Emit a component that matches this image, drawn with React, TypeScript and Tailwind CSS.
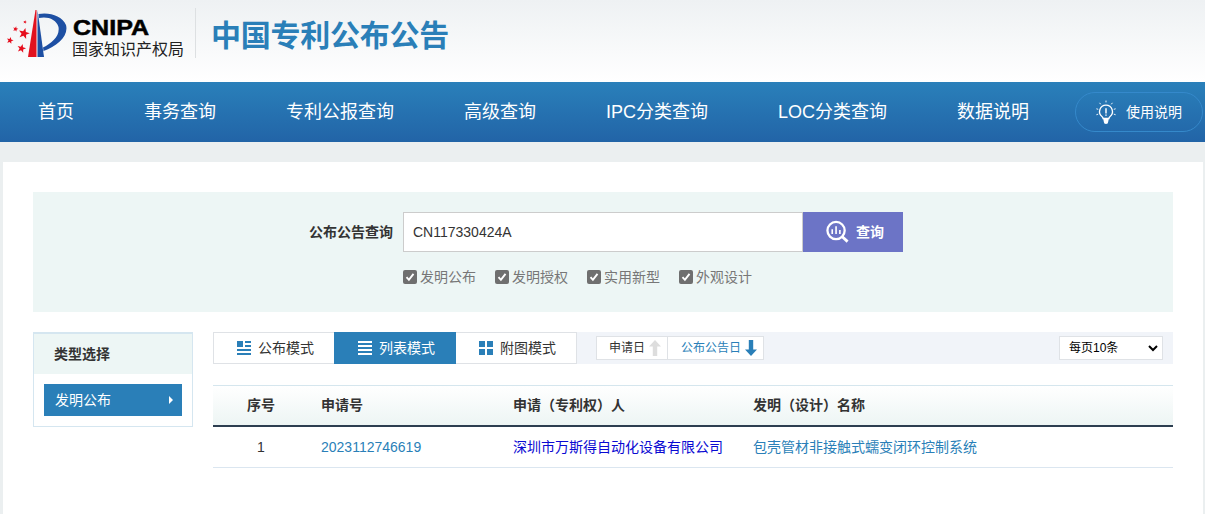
const FONT = "font-['Liberation_Sans','Noto_Sans_CJK_SC',sans-serif]";

function Logo() {
  const star = (cx: number, cy: number, r: number) => {
    const pts: string[] = [];
    for (let i = 0; i < 10; i++) {
      const rad = i % 2 === 0 ? r : r * 0.42;
      const a = -Math.PI / 2 + 0.25 + (i * Math.PI) / 5;
      pts.push(`${(cx + rad * Math.cos(a)).toFixed(2)},${(cy + rad * Math.sin(a)).toFixed(2)}`);
    }
    return <polygon points={pts.join(" ")} fill="#e60f1e" />;
  };
  return (
    <svg width="68" height="50" viewBox="0 0 68 50" className="shrink-0">
      {star(24, 25.5, 5.8)}
      {star(15.5, 21, 2.8)}
      {star(25, 14, 1.9)}
      {star(10, 32.5, 3.6)}
      {star(21.5, 40.5, 4.6)}
      <path d="M35.5 2 L36.5 2 L36.5 49 L28 49 Z" fill="#e2121f" />
      <path d="M37.5 2 L44 49 L37.5 49 Z" fill="#1d4fa3" />
      <path d="M38.5 6 C50 4 62 8 66 17 C69 28 57 38 43.5 43 L43 39.5 C52 35 60 28 58.5 19 C56.5 11 47 8 39 10 Z" fill="#1d4fa3" />
    </svg>
  );
}

function Bulb() {
  return (
    <svg width="22" height="26" viewBox="0 0 24 26" fill="none" className="shrink-0">
      <path d="M12 5.5a7 7 0 0 0-4.2 12.6c.7.6 1 1.3 1 2h6.4c0-.7.3-1.4 1-2A7 7 0 0 0 12 5.5Z" stroke="#fff" strokeWidth="1.4" />
      <path d="M9 20.5h6l-.6 3.2a2.4 2.4 0 0 1-4.8 0Z" fill="#fff" />
      <path d="M12 9v5.5M12 15.8v1.4" stroke="#fff" strokeWidth="1.6" />
      <path d="M12 0.5v2M5 3l1.2 1.6M19 3l-1.2 1.6M1.5 9.5l2 .6M22.5 9.5l-2 .6M1.5 16l2-.7M22.5 16l-2-.7" stroke="#fff" strokeWidth="1" />
    </svg>
  );
}

function SearchIcon() {
  return (
    <svg width="23" height="24" viewBox="0 0 24 24" fill="none" className="shrink-0">
      <circle cx="10.5" cy="10.5" r="9" stroke="#fff" strokeWidth="2.4" />
      <path d="M17 17l5.5 5" stroke="#fff" strokeWidth="3" />
      <path d="M6.5 9v5M10.5 6v8M14.5 10v4" stroke="#fff" strokeWidth="1.7" />
    </svg>
  );
}

function Check({ label }: { label: string }) {
  return (
    <label className="flex items-center w-[92px] text-[14px] leading-[20px] text-[#777777]">
      <span className="w-[14px] h-[14px] rounded-[2px] bg-[#6f6f6f] flex items-center justify-center mr-[3px]">
        <svg width="10" height="10" viewBox="0 0 10 10" fill="none">
          <path d="M1.5 5.2l2.4 2.6 4.6-6" stroke="#fff" strokeWidth="1.9" />
        </svg>
      </span>
      {label}
    </label>
  );
}

function ModeIcon({ kind, color }: { kind: "pub" | "list" | "grid"; color: string }) {
  if (kind === "pub")
    return (
      <svg width="14" height="14" viewBox="0 0 14 14" fill={color} className="shrink-0">
        <rect x="0" y="0" width="6" height="6" />
        <rect x="8" y="0" width="6" height="2" />
        <rect x="8" y="4" width="6" height="2" />
        <rect x="0" y="8" width="14" height="2" />
        <rect x="0" y="12" width="14" height="2" />
      </svg>
    );
  if (kind === "list")
    return (
      <svg width="14" height="14" viewBox="0 0 14 14" fill={color} className="shrink-0">
        <rect y="0" width="14" height="2" />
        <rect y="4" width="14" height="2" />
        <rect y="8" width="14" height="2" />
        <rect y="12" width="14" height="2" />
      </svg>
    );
  return (
    <svg width="14" height="14" viewBox="0 0 14 14" fill={color} className="shrink-0">
      <rect x="0" y="0" width="6" height="6" />
      <rect x="8" y="0" width="6" height="6" />
      <rect x="0" y="8" width="6" height="6" />
      <rect x="8" y="8" width="6" height="6" />
    </svg>
  );
}

function Arrow({ up, color }: { up: boolean; color: string }) {
  return (
    <svg width="12" height="16" viewBox="0 0 12 16" fill={color} className="shrink-0">
      {up ? <path d="M6 0l6 6.5H8.2V16H3.8V6.5H0Z" /> : <path d="M6 16L0 9.5h3.8V0h4.4v9.5H12Z" />}
    </svg>
  );
}

export default function App() {
  const nav = ["首页", "事务查询", "专利公报查询", "高级查询", "IPC分类查询", "LOC分类查询", "数据说明"];
  return (
    <div className={`${FONT} w-[1205px] h-[514px] overflow-hidden bg-[#ebeff0]`}>
      <header className="h-[82px] bg-gradient-to-b from-[#eef1f3] to-[#ffffff] flex items-start">
        <div className="w-[196px] h-[50px] mt-[8px] flex border-r border-[#dde0e2]">
          <Logo />
          <div className="ml-[5px] flex flex-col text-black">
            <span className="text-[22px] leading-[24px] font-bold mt-[8px] scale-x-[1.14] origin-left [-webkit-text-stroke:0.5px_#000]">CNIPA</span>
            <span className="text-[16px] leading-[18px] text-[#222] -ml-[1px] mt-[1px] whitespace-nowrap">国家知识产权局</span>
          </div>
        </div>
        <h1 className="ml-[15px] mt-[16px] text-[30px] leading-[40px] font-bold tracking-[-0.25px] text-[#2a7fb8] whitespace-nowrap">中国专利公布公告</h1>
      </header>

      <nav className="h-[60px] bg-gradient-to-b from-[#2a80ba] to-[#2264a7] flex items-center pl-[38px] text-white">
        <div className="flex gap-[70px] text-[18px] leading-[60px] whitespace-nowrap">
          {nav.map((n) => (
            <span key={n}>{n}</span>
          ))}
        </div>
        <div className="ml-[46px] w-[128px] h-[40px] rounded-[20px] border border-[#3589cb] flex items-center pl-[19px] gap-[9px] text-[14px]">
          <Bulb />
          <span className="whitespace-nowrap">使用说明</span>
        </div>
      </nav>

      <main className="mt-[20px] ml-[3px] w-[1200px] h-[352px] bg-white pt-[30px] pl-[30px] pr-[30px]">
        <section className="h-[120px] bg-[#edf6f5] pt-[20px] pl-[276px]">
          <div className="flex items-center">
            <span className="w-[84px] text-[14px] font-bold text-[#333] whitespace-nowrap">公布公告查询</span>
            <div className="ml-[10px] w-[400px] h-[40px] bg-white border border-[#cccccc] flex items-center pl-[9px] text-[14px] text-[#333]">CN117330424A</div>
            <button className="w-[100px] h-[40px] bg-[#6c74c6] flex items-center justify-start pl-[23px] gap-[7px] text-white text-[14px] font-bold">
              <SearchIcon />
              <span className="whitespace-nowrap">查询</span>
            </button>
          </div>
          <div className="flex ml-[94px] mt-[15px]">
            {["发明公布", "发明授权", "实用新型", "外观设计"].map((c) => (
              <Check key={c} label={c} />
            ))}
          </div>
        </section>

        <section className="flex mt-[20px]">
          <aside className="w-[160px] h-[95px] border border-t-2 border-[#d5e6f0]">
            <div className="h-[40px] bg-[#edf6f5] pl-[20px] text-[14px] font-bold leading-[40px] text-[#333]">类型选择</div>
            <div className="mx-[10px] mt-[10px] h-[32px] bg-[#2a7fb8] flex items-center justify-between pl-[11px] pr-[9px] text-[14px] text-white">
              <span>发明公布</span>
              <svg width="4" height="8" viewBox="0 0 4 8" fill="#fff"><path d="M0 0l4 4-4 4Z" /></svg>
            </div>
          </aside>

          <div className="ml-[20px] flex-1">
            <div className="flex h-[32px] bg-[#f1f4f9] items-stretch">
              <div className="flex w-[364px] border border-[#dfe2e6] bg-white text-[14px] text-[#333]">
                <div className="w-[120px] flex items-center pl-[23px] gap-[7px]"><ModeIcon kind="pub" color="#2a7fb8" />公布模式</div>
                <div className="w-[122px] -my-px flex items-center pl-[24px] gap-[7px] bg-[#2a7fb8] text-white"><ModeIcon kind="list" color="#fff" />列表模式</div>
                <div className="flex-1 flex items-center pl-[23px] gap-[7px]"><ModeIcon kind="grid" color="#2a7fb8" />附图模式</div>
              </div>
              <div className="ml-[19px] self-center h-[24px] flex border border-[#dfe2e6] bg-white text-[12px]">
                <div className="w-[71px] border-r border-[#dfe2e6] flex items-center pl-[12px] gap-[4px] text-[#333]">申请日<Arrow up color="#dddddd" /></div>
                <div className="w-[95px] flex items-center pl-[13px] gap-[4px] text-[#2a7fb8]">公布公告日<Arrow up={false} color="#2a7fb8" /></div>
              </div>
              <div className="ml-auto mr-[10px] self-center w-[104px] h-[24px] border border-[#dfe2e6] bg-white flex items-center justify-between pl-[9px] pr-[3px] text-[12px] text-black">
                <span>每页10条</span>
                <svg width="12" height="12" viewBox="0 0 12 12" fill="none"><path d="M2 4l4 4 4-4" stroke="#000" strokeWidth="2" /></svg>
              </div>
            </div>

            <div className="mt-[21px] grid grid-cols-[96px_192px_240px_1fr] h-[42px] items-center border-t border-b-2 border-t-[#d5e6ee] border-b-[#2d3e50] bg-gradient-to-b from-white to-[#edf5f4] text-[14px] font-bold text-[#333]">
              <div className="text-center">序号</div>
              <div className="pl-[12px]">申请号</div>
              <div className="pl-[12px]">申请（专利权）人</div>
              <div className="pl-[12px]">发明（设计）名称</div>
            </div>
            <div className="grid grid-cols-[96px_192px_240px_1fr] h-[41px] items-center border-b border-[#dbe6f0] text-[14px] text-[#2a7fb8]">
              <div className="text-center text-[#333]">1</div>
              <div className="pl-[12px]">2023112746619</div>
              <div className="pl-[12px] text-[#0a0ad2] whitespace-nowrap">深圳市万斯得自动化设备有限公司</div>
              <div className="pl-[12px] whitespace-nowrap">包壳管材非接触式蠕变闭环控制系统</div>
            </div>
          </div>
        </section>
      </main>
    </div>
  );
}
